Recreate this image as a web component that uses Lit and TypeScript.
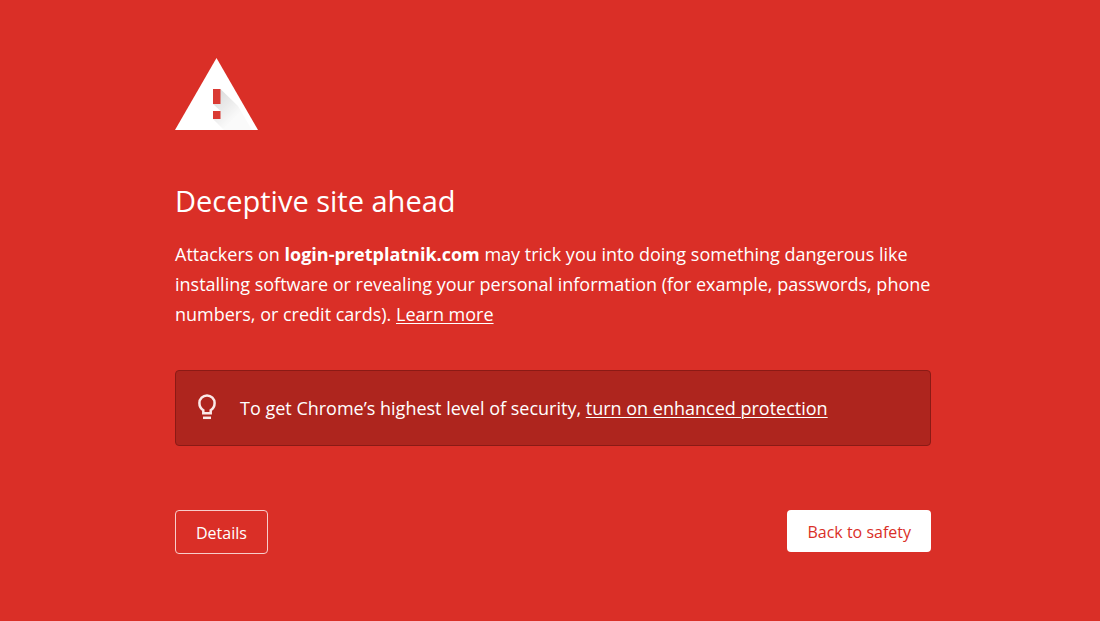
import { LitElement, html, css } from "lit";
import { customElement } from "lit/decorators.js";

@customElement("app-root")
export class AppRoot extends LitElement {
  static styles = css`
    :host {
      display: block;
      box-sizing: border-box;
      min-height: 100vh;
      padding: 58px 24px 66px 30px;
      background: #da2f27;
      color: #fff;
      font-family: "Open Sans", "Noto Sans", sans-serif;
      font-size: 18px;
      line-height: 30px;
    }
    .page {
      max-width: 756px;
      margin: 0 auto;
    }
    .warning {
      display: block;
      width: 83px;
      height: 72px;
    }
    h1 {
      margin: 51px 0 18px;
      font-size: 29px;
      line-height: 40px;
      font-weight: 400;
    }
    p {
      margin: 0;
    }
    a {
      color: inherit;
      text-decoration: underline;
      text-underline-offset: 2px;
      text-decoration-thickness: 1px;
    }
    .tip {
      display: flex;
      align-items: center;
      gap: 20px;
      margin-top: 41px;
      padding: 22px 20px 22px 18px;
      border: 1px solid #8b1a15;
      border-radius: 4px;
      background: #ae251e;
    }
    .bulb {
      flex: none;
      width: 26px;
      height: 30px;
    }
    .actions {
      display: flex;
      justify-content: space-between;
      align-items: flex-start;
      margin-top: 64px;
    }
    button {
      border-radius: 4px;
      font: inherit;
      font-size: 16px;
      line-height: 22px;
      padding: 11px 20px 9px;
      cursor: pointer;
    }
    .details {
      border: 1px solid #f8cdca;
      background: transparent;
      color: #fff;
    }
    .safe {
      border: 0;
      background: #fff;
      color: #da2f27;
    }
  `;

  render() {
    return html`
      <main class="page">
        <svg class="warning" viewBox="0 0 83 72" aria-hidden="true">
          <defs>
            <linearGradient id="shade" gradientUnits="userSpaceOnUse" x1="42" y1="38" x2="62" y2="58">
              <stop offset="0" stop-color="#000" stop-opacity="0.13" />
              <stop offset="1" stop-color="#000" stop-opacity="0.02" />
            </linearGradient>
          </defs>
          <path d="M41.5 0 83 72H0z" fill="#fff" />
          <path d="M45.500 31 63 48 77 72H49L38 61 45.500 53 38 46z" fill="url(#shade)" />
          <path d="M38 31h7.500v15H38zM38 53h7.500v8H38z" fill="#da3a33" />
        </svg>
        <h1>Deceptive site ahead</h1>
        <p>Attackers on <strong>login-pretplatnik.com</strong> may trick you into doing something dangerous like installing software or revealing your personal information (for example, passwords, phone numbers, or credit cards). <a href="#learn">Learn more</a></p>
        <div class="tip">
          <svg class="bulb" viewBox="0 0 26 30" fill="none" stroke="#fbe9e8" stroke-width="2.500" aria-hidden="true">
            <path d="M9.300 20.200V17.200C6.900 15.700 5.400 13.200 5.400 10a7.600 7.600 0 0 1 15.200 0c0 3.200-1.500 5.700-3.900 7.200v3z" />
            <path d="M9 24.800h8" />
          </svg>
          <p>To get Chrome’s highest level of security, <a href="#enhanced">turn on enhanced protection</a></p>
        </div>
        <div class="actions">
          <button class="details" type="button">Details</button>
          <button class="safe" type="button">Back to safety</button>
        </div>
      </main>
    `;
  }
}
